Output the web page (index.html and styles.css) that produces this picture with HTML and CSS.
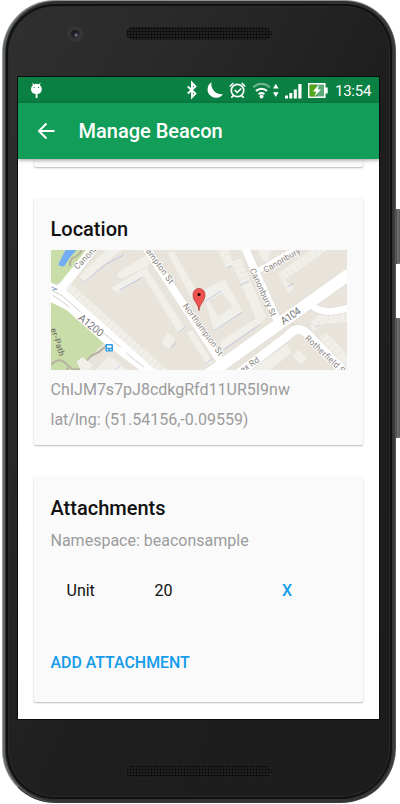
FILE: index.html
```html
<!DOCTYPE html>
<html lang="en">
<head>
<meta charset="utf-8">
<title>Manage Beacon</title>
<link rel="stylesheet" href="styles.css">
</head>
<body>
<div class="device">
  <i class="side-button power"></i>
  <i class="side-button volume"></i>
  <div class="phone">
    <div class="bezel top"><i class="camera"></i><i class="speaker"></i></div>
    <main class="screen">
      <div class="status">
        <svg class="status-icons" width="361" height="26" viewBox="18 77 361 26" fill="#fff">
          <path d="M31 89a5.400 5.400 0 0 1 2-4l-1-2.300 2.200 1.600a6 6 0 0 1 4.400 0l2.200-1.600-1 2.300a5.400 5.400 0 0 1 2 4c0 3-1.500 4.600-4.300 5v4h-1.800v-4C32.500 93.600 31 92 31 89z"/>
          <path d="M33.700 87h1v.9h-1zM38 87h1v.9h-1z" fill="#0b8043"/>
          <path d="M187.800 86.500l7.700 7-3.500 3.700V82.800l3.500 3.700-7.700 7" fill="none" stroke="#fff" stroke-width="1.900"/>
          <path d="M211.500 82.300A8.400 8.400 0 1 0 223 94A10 10 0 0 1 211.500 82.300z"/>
          <g fill="none" stroke="#fff" stroke-width="1.700"><circle cx="237.500" cy="90.500" r="6.200"/><path d="M229.800 86.500l3.500-3.500M241.700 83l3.500 3.500M233.500 95.500l-2.200 2.200M241.500 95.500l2.200 2.200M234.700 90l2.500 2.500 4-4"/></g>
          <g fill="none" stroke="#fff" stroke-width="2.200"><path d="M253.200 87.500a11.500 11.500 0 0 1 16.600 0" opacity=".4"/><path d="M256 91a7.800 7.800 0 0 1 11 0M258.700 94.200a4 4 0 0 1 5.600 0"/></g>
          <circle cx="261.500" cy="96.500" r="1.900"/><path d="M273 88.500l2.800-4.800 2.800 4.800zM273 92.300h5.600l-2.800 4.800z"/>
          <path d="M285 95.500h3v3h-3zM289.300 93h3v5.500h-3zM293.800 89.500h3v9h-3zM298.300 84h3.200v14.500h-3.200z"/>
          <path d="M325 87.500h2.700v6H325z"/><rect x="308.800" y="83.800" width="16" height="13.400" fill="#5baa78" stroke="#fff" stroke-width="1.600"/><path d="M309.600 84.600h7v11.800h-7z" fill="#55a51c"/>
          <path d="M318.800 84.800l-6 6.600h3.400l-1.700 5 6.500-6.800h-3.200z"/>
        </svg>
        <time class="clock">13:54</time>
      </div>
      <header class="appbar">
        <svg width="18" height="18" viewBox="0 0 18 18" fill="none" stroke="#fff" stroke-width="2"><path d="M17.500 9H2.500M9.500 1.500L2 9l7.500 7.500"/></svg>
        <h1>Manage Beacon</h1>
      </header>
      <section class="card previous"></section>
      <section class="card location">
        <h2>Location</h2>
        <svg class="map" viewBox="50.500 250 296.500 120" preserveAspectRatio="none">
          <rect x="50" y="250" width="298" height="120" fill="#e8e4dc"/>
          <path d="M50 250h39L61 282l-11 4zM50 301l17 9 37 32-13 14-13 14H50z" fill="#c8dda8"/>
          <path d="M65 250h11l-7 8-5 8c-3 1-6 0-6-2z" fill="#72acf3"/>
          <path d="M81 250q-1 5-9 8-4 5-2 8M50 365c6-6 11-6 15-2 8 10 14 9 22-3 4-7 10-5 15-11l6-5M68 368l-2 2" fill="none" stroke="#b6b1a0" stroke-width="2"/>
          <g fill="#f1efe9">
            <path d="M106 250h15l-25 20-10 12-7-5 7-9zM118 272q-3 7 4 6l24-11 4-6-4-6zM110 288l30-17 3 5-19 11-6 6z"/>
            <path d="M140 271l6-3 39 61-7 4zM167 253l6-2 24 41-6 6zM161 343l6-11 8 7-7 10zM186 333l6-3 20 32-5 3z"/>
            <path fill-rule="evenodd" d="M202 291l22-12 18 32-28 21zM208 301l14-8 10 14-14 10z"/>
            <path d="M219 342l40-26 4 5-41 28zM218 250h10l5 14-7 5zM231 262l9-4 26 60-9 4zM278 273l33-23h16l-43 30 9 8-5 5zM249 370l38-26 4 9-22 17zM292 356l6-6 9 8-7 6zM319 338l6-6 22 23v15zM310 324c4-12 20-10 37-14v11c-13 4-24-1-30 8l-5 2zM64 290l7-6 96 86h-17zM76 362l6-5 10 8-4 5h-8zM95 370l14-14 18 14z"/>
            <path d="M258 250h12l-3 12-6-3z"/>
          </g>
          <g stroke="#e6e2da" stroke-width="9" stroke-dasharray=".700 5" fill="none"><path d="M70 289l90 80"/><path d="M223 250l7 15M237 262l9 24M283 278l42-29M314 326q7-14 33-10M322 337l24 26"/></g>
          <g stroke="#bbc4df" stroke-width=".9" fill="none"><path d="M84 282l22-18 17-9M119 290l22-12M178 332l7-5M171 348l5-6M205 301l16-10M213 331l29-19M223 350l36-25M287 287l6-4M226 268l5-2M240 285l8-4M264 264l6-3M315 327l4-2M206 363l6-4M115 370l5-5"/></g>
          <g fill="none" stroke="#dcd8d0">
            <g stroke-width="9"><path d="M145 247l78 117M244 247l34 76"/><path d="M236 375l51-39q10-12 20-2l36 37" stroke-width="10"/><path d="M309 302q9 15 39 6" stroke-width="8"/></g>
            <path d="M349 274L207 375" stroke-width="13"/><path d="M290 320l6 8" stroke-width="2"/>
          </g>
          <g fill="none" stroke="#fff">
            <g stroke-width="8"><path d="M93 248L58 292" stroke-width="9"/><path d="M145 247l79 120M244 247l34 76"/><path d="M236 375l51-39q10-12 20-2l36 37" stroke-width="9"/><path d="M309 302q9 15 39 6" stroke-width="7"/><path d="M257 271l43-25" stroke-width="5"/></g>
            <path d="M349 274L207 375" stroke-width="12"/>
          </g>
          <path d="M50 282l15 8 90 80h-16l-37-28-36-32-16-8z" fill="#fff"/>
          <path d="M51 290l11 6 18 16M103 333l17 14M126 353l17 14M52 295l17 12" fill="none" stroke="#c4c3c0" stroke-width=".8"/>
          <path d="M51 287l5 2M52 290l5-1" stroke="#8da0cb"/>
          <g class="street">
            <text transform="translate(77 270) rotate(-46)" textLength="30">Canonb</text>
            <text transform="translate(145 251) rotate(54)" textLength="41">ampton St</text>
            <text transform="translate(182 306) rotate(54)" textLength="62">Northampton St</text>
            <text transform="translate(249 270) rotate(65)" textLength="52">Canonbury St</text>
            <text transform="translate(265 273) rotate(-30)" textLength="41">Canonbury</text>
            <text transform="translate(304 339) rotate(43)" textLength="51">Rotherfield S</text>
            <text transform="translate(242 373) rotate(-34)" textLength="21">ex Rd</text>
            <text class="path-name" transform="translate(50 329) rotate(72)" textLength="29">er-Path</text>
            <text class="route" transform="translate(77 319) rotate(39)" textLength="29">A1200</text>
            <text class="route" transform="translate(283 325) rotate(-34)" textLength="22">A104</text>
          </g>
          <rect x="105" y="344" width="7.500" height="7.500" rx="1" fill="#2e9bea"/><path d="M106.500 345.500h4.500v2.200h-4.500zM106.500 349h1.300v1.200h-1.300zM109.700 349h1.300v1.200h-1.300z" fill="#fff"/>
          <path d="M198.500 310.500c-.5-7-6-9-6-16a6 6 0 0 1 12 0c0 7-5.500 9-6 16z" fill="#ef5350" stroke="#b83b37" stroke-width=".8"/><circle cx="198.500" cy="294.500" r="1.600" fill="#200"/>
        </svg>
        <p class="place">ChIJM7s7pJ8cdkgRfd11UR5I9nw</p>
        <p class="coords">lat/lng: (51.54156,-0.09559)</p>
      </section>
      <section class="card attachments">
        <h2>Attachments</h2>
        <p class="namespace">Namespace: beaconsample</p>
        <div class="row"><span>Unit</span><span>20</span><a>X</a></div>
        <a class="add">ADD ATTACHMENT</a>
      </section>
    </main>
    <div class="bezel bottom"><i class="speaker"></i></div>
  </div>
</div>
</body>
</html>
```
FILE: styles.css
```css
* { box-sizing: border-box; }
body { margin: 0; background: #fff; font-family: Roboto, "Liberation Sans", sans-serif; overflow: hidden; }
.device { display: flow-root; position: relative; width: 400px; height: 804px; }
.phone {
  position: relative; width: 394px; height: 803px; margin-left: 1.500px; padding: 3px 15px 0 15px;
  border: 1px solid; border-color: #8d9290 #555 #3a3a3a #969b9a; border-radius: 53px 51px 55px 53px;
  background: linear-gradient(115deg, #303030, #292929 25%, #1e1e1e 55%, #1c1c1e);
  box-shadow: inset 2px 0 0 #626766, inset -2px 0 0 #3c3a3c, inset 0 -2px 0 #343434, inset 0 0 0 3px #303232, inset 0 0 0 5px #101010, inset 0 0 0 6px #2a2a2a;
}
.side-button { position: absolute; left: 395px; width: 5px; border-radius: 0 1px 1px 0; background: linear-gradient(90deg, #333, #777275 60%, #555); }
.power { top: 209px; height: 55px; }
.volume { top: 318px; height: 120px; }
.bezel { display: flex; align-items: flex-start; }
.top { height: 73px; padding: 23px 0 0 49px; }
.camera { width: 16px; height: 16px; margin: -1px 43px 0 0; border: 4px solid #353535; border-radius: 50%; background: radial-gradient(circle at 65% 65%, #756575 0 1px, #292638 2px, #1c1b24 4px); }
.speaker { width: 146px; height: 13px; border-radius: 7px; background: radial-gradient(circle, #080808 0 .8px, transparent 1.2px) 0 0 / 3px 3px, #202020; box-shadow: 0 0 1px #444; }
.bottom { padding: 46px 0 0 108px; }
.screen { width: 361px; height: 642px; margin-left: .5px; background: #fff; overflow: hidden; outline: 1px solid #0c0c0c; }
.status { position: relative; height: 26px; background: #0b8043; }
.status-icons { display: block; }
.clock { position: absolute; left: 317px; top: 4px; font-size: 15px; line-height: 20px; color: #fff; letter-spacing: -.25px; }
.appbar { position: relative; display: flex; align-items: center; gap: 23.500px; height: 55.500px; padding: 1px 0 0 19px; background: #129d58; box-shadow: 0 1px 4px rgba(0,0,0,.4); }
h1 { margin: 0; color: #fff; font-size: 20px; font-weight: 500; line-height: 28px; }
.card { width: 329px; margin-left: 16px; padding: 0 16.500px; border-radius: 2px; background: #fafafa; box-shadow: 0 1px 2px rgba(0,0,0,.28); }
.previous { height: 8.500px; }
.location { height: 247px; margin-top: 31px; padding-top: 19px; }
h2 { margin: 0; color: #111; font-size: 20px; line-height: 24px; font-weight: 500; }
.map { display: block; width: 296.500px; height: 120px; margin-top: 9px; }
p { margin: 0; color: #9c9c9c; font-size: 16px; line-height: 20px; }
.place { margin-top: 10px; }
.coords { margin-top: 10px; }
.attachments { height: 225px; margin-top: 32px; padding-top: 19px; }
.namespace { margin-top: 11px; }
.row { display: grid; grid-template-columns: 88px 127.500px 1fr; margin-top: 30px; padding-left: 16px; color: #111; font-size: 16px; line-height: 20px; }
.row a, .add { color: #149ceb; font-weight: 500; }
.add { display: block; margin-top: 52px; font-size: 15.900px; line-height: 20px; }
.street { font: 8.500px Roboto, sans-serif; fill: #85827d; stroke: #fff; stroke-width: 1.500px; paint-order: stroke; }
.route { font-size: 10.500px; fill: #777; }
.path-name { font-size: 8.500px; font-weight: 500; fill: #76766a; stroke: #c8dda8; }
```
